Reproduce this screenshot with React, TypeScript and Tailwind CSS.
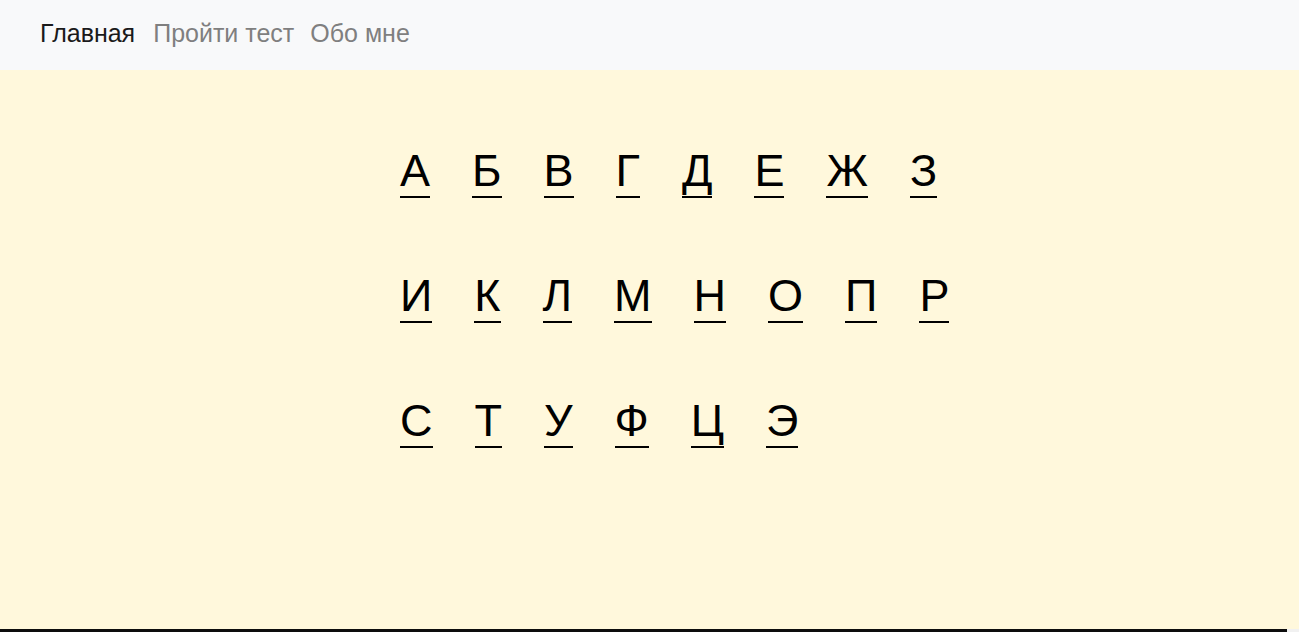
const rows = [
  ['А', 'Б', 'В', 'Г', 'Д', 'Е', 'Ж', 'З'],
  ['И', 'К', 'Л', 'М', 'Н', 'О', 'П', 'Р'],
  ['С', 'Т', 'У', 'Ф', 'Ц', 'Э'],
]

export default function App() {
  return (
    <div className="min-h-screen font-['Liberation_Sans',Arial,sans-serif]">
      <nav className="bg-[#f8f9fa] h-[70px] flex items-center pl-8 pb-[3px] text-[25px]">
        <a className="pl-2 pr-[10px] text-[#1a1a1a]">Главная</a>
        <a className="px-2 text-[#7f7f7f]">Пройти тест</a>
        <a className="px-2 text-[#7f7f7f]">Обо мне</a>
      </nav>

      <main className="bg-[#fff8dc] h-[559px] pt-[38px] pl-[400px]">
        {rows.map((row, i) => (
          <div key={i} className="text-[45px] leading-[125px] whitespace-nowrap text-black">
            {row.map(letter => (
              <span key={letter} className="border-b-2 border-black mr-[42px] cursor-pointer">
                {letter}
              </span>
            ))}
          </div>
        ))}
      </main>

      <footer className="flex h-[40px]">
        <div className="flex-1 bg-[#0d0d0d]" />
        <div className="w-[12px] bg-[#f1f1f1]" />
      </footer>
    </div>
  )
}
